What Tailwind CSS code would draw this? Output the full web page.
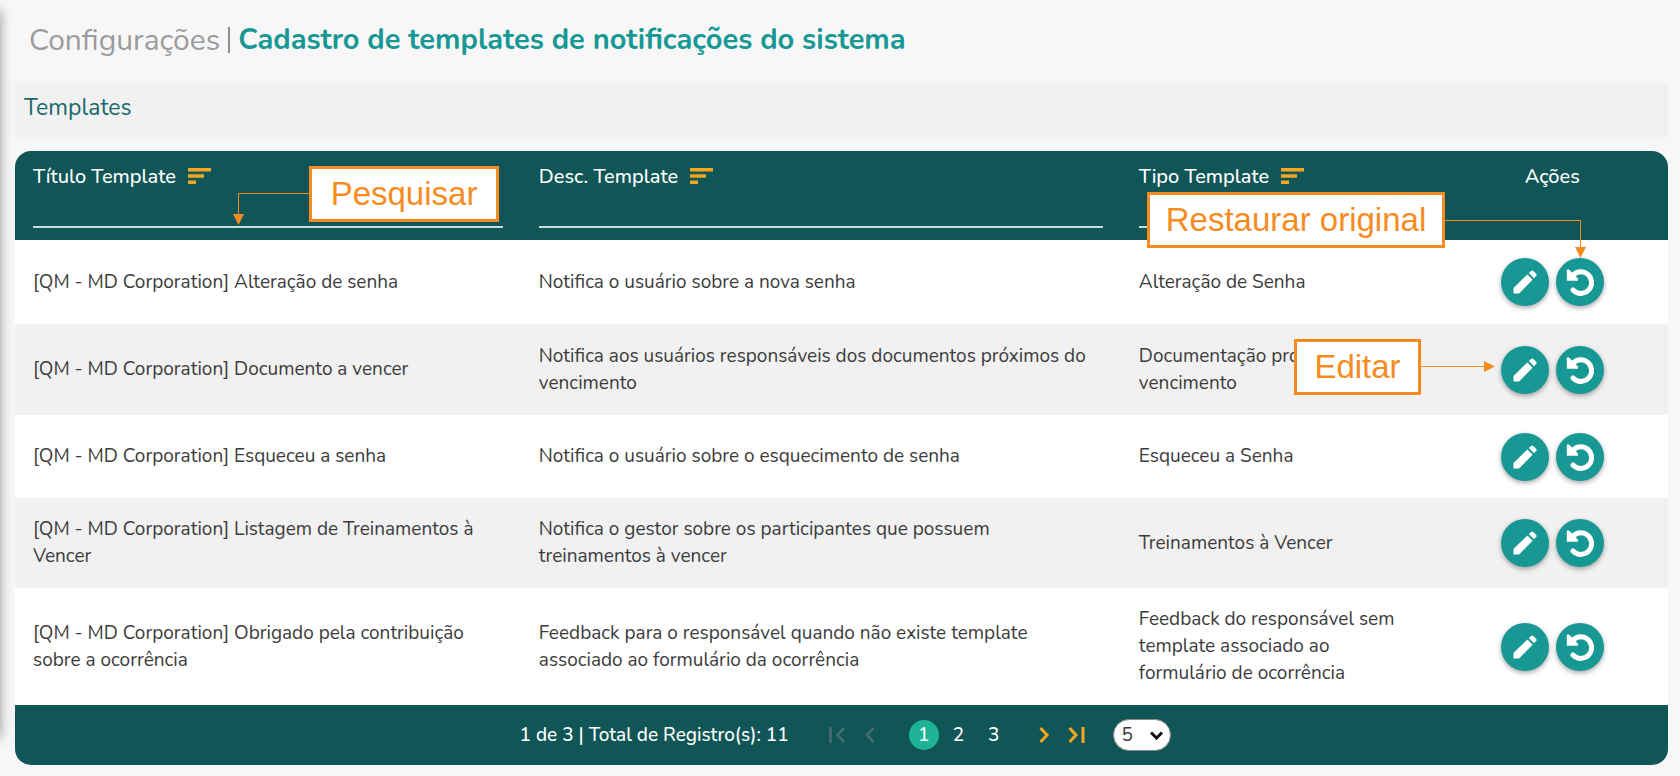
<!DOCTYPE html>
<html lang="pt-BR">
<head>
<meta charset="utf-8">
<meta name="viewport" content="width=device-width, initial-scale=1">
<title>Cadastro de templates de notificações do sistema</title>
<script src="https://cdn.jsdelivr.net/npm/@tailwindcss/browser@4"></script>
</head>
<body class="relative min-h-screen overflow-x-hidden bg-[#f7f7f7] font-['Nunito','Open_Sans',sans-serif] text-[#3c3c3c]">

<svg class="hidden" aria-hidden="true">
  <symbol id="sort" viewBox="0 0 23 16"><path fill="currentColor" d="M0 0h23v3.500H0zM0 6.300h16v3.400H0zM0 12.500h8V16H0z"/></symbol>
  <symbol id="pencil" viewBox="0 0 24 24"><path fill="currentColor" d="M.5 23.500v-5.500L14.400 4.500l5.200 5.200L6 23.500zM15.800 3.100l2-1.900a2 2 0 0 1 2.800 0l2.300 2.300a2 2 0 0 1 0 2.800L21 8.300z"/></symbol>
  <symbol id="undo" viewBox="0 0 28 28"><path fill="none" stroke="currentColor" stroke-width="5" stroke-linecap="round" d="M7 7.200A10.800 10.800 0 1 1 7 22"/><path fill="currentColor" d="M.8 1.500h2.200L12 10.500v2.200H.8z"/></symbol>
</svg>

<!-- Edge of the collapsed side menu -->
<div class="absolute bottom-10 -left-4 top-3 w-4 shadow-[0_0_12px_1px_rgba(0,0,0,0.35)]" aria-hidden="true"></div>

<main class="pl-[15px] pr-3 pb-3">
  <h1 class="flex h-[84px] items-center gap-2 pb-1 pl-[14px] text-[30px]">
    <span class="text-[#9c9c9c]">Configurações</span>
    <span class="h-[26px] w-0.5 bg-[#8f8f8f]" aria-hidden="true"></span>
    <span class="text-[29px] font-bold text-[#189894]">Cadastro de templates de notificações do sistema</span>
  </h1>
  <h2 class="mb-[14px] flex h-[53px] items-center bg-[#f1f1f1] pb-1 pl-[9px] text-[23px] text-[#16696a]">Templates</h2>

  <div class="relative">
    <table class="w-full table-fixed border-separate border-spacing-0 text-left text-[19px] leading-[27px]">
      <colgroup><col class="w-[30.6%]"><col class="w-[36.3%]"><col class="w-[19.1%]"><col class="w-[14%]"></colgroup>
      <thead class="text-[20px] text-white">
        <tr class="align-top">
          <th class="h-[89px] rounded-tl-2xl bg-[#105656] px-[18px] pt-3 font-medium">
            <span class="flex items-center gap-3"><label for="f1">Título Template</label><button type="button" aria-label="Ordenar por título" class="pb-0.5 text-[#f5a623]"><svg class="h-4 w-[23px]"><use href="#sort"/></svg></button></span>
            <input id="f1" type="text" class="block h-[38px] w-full border-b-2 border-[#c9dcdb] bg-transparent outline-none">
          </th>
          <th class="bg-[#105656] px-[18px] pt-3 font-medium">
            <span class="flex items-center gap-3"><label for="f2">Desc. Template</label><button type="button" aria-label="Ordenar por descrição" class="pb-0.5 text-[#f5a623]"><svg class="h-4 w-[23px]"><use href="#sort"/></svg></button></span>
            <input id="f2" type="text" class="block h-[38px] w-full border-b-2 border-[#c9dcdb] bg-transparent outline-none">
          </th>
          <th class="bg-[#105656] px-[18px] pt-3 font-medium">
            <span class="flex items-center gap-3"><label for="f3">Tipo Template</label><button type="button" aria-label="Ordenar por tipo" class="pb-0.5 text-[#f5a623]"><svg class="h-4 w-[23px]"><use href="#sort"/></svg></button></span>
            <input id="f3" type="text" class="block h-[38px] w-full border-b-2 border-[#c9dcdb] bg-transparent outline-none">
          </th>
          <th class="rounded-tr-2xl bg-[#105656] px-[18px] pt-3 text-center font-medium">Ações</th>
        </tr>
      </thead>
      <tbody>
        <tr class="h-[84px] bg-white">
          <td class="px-[18px]">[QM - MD Corporation] Alteração de senha</td>
          <td class="px-[18px]">Notifica o usuário sobre a nova senha</td>
          <td class="px-[18px]">Alteração de Senha</td>
          <td><div class="flex justify-center gap-[7px]"><button type="button" aria-label="Editar" class="grid size-12 place-items-center rounded-full bg-[#189894] text-white shadow-[0_2px_5px_rgba(0,0,0,0.35)]"><svg class="size-6"><use href="#pencil"/></svg></button><button type="button" aria-label="Restaurar original" class="grid size-12 place-items-center rounded-full bg-[#189894] text-white shadow-[0_2px_5px_rgba(0,0,0,0.35)]"><svg class="size-7"><use href="#undo"/></svg></button></div></td>
        </tr>
        <tr class="h-[91px] bg-[#f1f1f1]">
          <td class="px-[18px]">[QM - MD Corporation] Documento a vencer</td>
          <td class="px-[18px]">Notifica aos usuários responsáveis dos documentos próximos do vencimento</td>
          <td class="px-[18px]">Documentação próximo do vencimento</td>
          <td><div class="flex justify-center gap-[7px]"><button type="button" aria-label="Editar" class="grid size-12 place-items-center rounded-full bg-[#189894] text-white shadow-[0_2px_5px_rgba(0,0,0,0.35)]"><svg class="size-6"><use href="#pencil"/></svg></button><button type="button" aria-label="Restaurar original" class="grid size-12 place-items-center rounded-full bg-[#189894] text-white shadow-[0_2px_5px_rgba(0,0,0,0.35)]"><svg class="size-7"><use href="#undo"/></svg></button></div></td>
        </tr>
        <tr class="h-[83px] bg-white">
          <td class="px-[18px]">[QM - MD Corporation] Esqueceu a senha</td>
          <td class="px-[18px]">Notifica o usuário sobre o esquecimento de senha</td>
          <td class="px-[18px]">Esqueceu a Senha</td>
          <td><div class="flex justify-center gap-[7px]"><button type="button" aria-label="Editar" class="grid size-12 place-items-center rounded-full bg-[#189894] text-white shadow-[0_2px_5px_rgba(0,0,0,0.35)]"><svg class="size-6"><use href="#pencil"/></svg></button><button type="button" aria-label="Restaurar original" class="grid size-12 place-items-center rounded-full bg-[#189894] text-white shadow-[0_2px_5px_rgba(0,0,0,0.35)]"><svg class="size-7"><use href="#undo"/></svg></button></div></td>
        </tr>
        <tr class="h-[90px] bg-[#f1f1f1]">
          <td class="px-[18px]">[QM - MD Corporation] Listagem de Treinamentos à Vencer</td>
          <td class="px-[18px]">Notifica o gestor sobre os participantes que possuem treinamentos à vencer</td>
          <td class="px-[18px]">Treinamentos à Vencer</td>
          <td><div class="flex justify-center gap-[7px]"><button type="button" aria-label="Editar" class="grid size-12 place-items-center rounded-full bg-[#189894] text-white shadow-[0_2px_5px_rgba(0,0,0,0.35)]"><svg class="size-6"><use href="#pencil"/></svg></button><button type="button" aria-label="Restaurar original" class="grid size-12 place-items-center rounded-full bg-[#189894] text-white shadow-[0_2px_5px_rgba(0,0,0,0.35)]"><svg class="size-7"><use href="#undo"/></svg></button></div></td>
        </tr>
        <tr class="h-[117px] bg-white">
          <td class="px-[18px]">[QM - MD Corporation] Obrigado pela contribuição sobre a ocorrência</td>
          <td class="px-[18px]">Feedback para o responsável quando não existe template associado ao formulário da ocorrência</td>
          <td class="pl-[18px] pr-6">Feedback do responsável sem template associado ao formulário de ocorrência</td>
          <td><div class="flex justify-center gap-[7px]"><button type="button" aria-label="Editar" class="grid size-12 place-items-center rounded-full bg-[#189894] text-white shadow-[0_2px_5px_rgba(0,0,0,0.35)]"><svg class="size-6"><use href="#pencil"/></svg></button><button type="button" aria-label="Restaurar original" class="grid size-12 place-items-center rounded-full bg-[#189894] text-white shadow-[0_2px_5px_rgba(0,0,0,0.35)]"><svg class="size-7"><use href="#undo"/></svg></button></div></td>
        </tr>
      </tbody>
    </table>

    <nav aria-label="Paginação" class="flex h-[60px] items-center justify-center rounded-b-2xl bg-[#105656] pl-2 text-[19px] font-medium text-white">
      <span class="mr-10">1 de 3 | Total de Registro(s): 11</span>
      <button type="button" disabled aria-label="Primeira página" class="mr-[18px] text-[#4f6a73]"><svg class="h-4 w-[17px]" viewBox="0 0 17 16" fill="none" stroke="currentColor" stroke-width="2.500"><path d="M1.500 0v16M15 1L8.500 8l6.500 7"/></svg></button>
      <button type="button" disabled aria-label="Página anterior" class="mr-[34px] text-[#4f6a73]"><svg class="h-4 w-[11px]" viewBox="0 0 11 16" fill="none" stroke="currentColor" stroke-width="2.500"><path d="M9.500 1L3 8l6.500 7"/></svg></button>
      <button type="button" aria-current="page" class="size-[30px] rounded-full bg-[#1eb394]">1</button>
      <button type="button" class="ml-[14px]">2</button>
      <button type="button" class="ml-6">3</button>
      <button type="button" aria-label="Próxima página" class="ml-10 text-[#f9a61c]"><svg class="h-4 w-[11px]" viewBox="0 0 11 16" fill="none" stroke="currentColor" stroke-width="3"><path d="M1.500 1L8 8l-6.500 7"/></svg></button>
      <button type="button" aria-label="Última página" class="ml-[18px] text-[#f9a61c]"><svg class="h-4 w-[17px]" viewBox="0 0 17 16" fill="none" stroke="currentColor" stroke-width="3"><path d="M1.500 1L8 8l-6.500 7M15 0v16"/></svg></button>
      <span class="relative ml-7">
        <select aria-label="Registros por página" class="block h-8 w-[58px] appearance-none rounded-full border border-[#8a8a8a] bg-white pl-[7px] text-[19px] font-normal leading-6 text-[#3c3c3c]"><option>5</option><option>10</option><option>20</option></select>
        <svg class="pointer-events-none absolute right-2 top-3 h-[9px] w-[13px]" viewBox="0 0 13 9" fill="none" stroke="#111" stroke-width="3"><path d="M1 1.500l5.500 5.500L12 1.500"/></svg>
      </span>
    </nav>

    <!-- Call-outs drawn over the table -->
    <div class="pointer-events-none font-['Liberation_Sans',Arial,sans-serif] text-[33px] text-[#f68b1f]">
      <svg class="absolute left-[217px] top-[42px] h-8 w-[77px]" viewBox="0 0 77 32"><path fill="none" stroke="currentColor" d="M77 .5H6.500V22"/><path fill="currentColor" d="M1 21h11L6.500 32z"/></svg>
      <div class="absolute left-[294px] top-[15px] flex h-14 w-[190px] items-center justify-center border-[3px] border-current bg-white">Pesquisar</div>
      <svg class="absolute right-[81px] top-[69px] h-[38px] w-[142px]" viewBox="0 0 142 38"><path fill="none" stroke="currentColor" d="M0 .5h135.500V28"/><path fill="currentColor" d="M130 27h11l-5.500 11z"/></svg>
      <div class="absolute right-[223px] top-[41px] flex h-14 w-[298px] items-center justify-center border-[3px] border-current bg-white">Restaurar original</div>
      <svg class="absolute right-[173px] top-[210px] h-[11px] w-[75px]" viewBox="0 0 75 11"><path fill="none" stroke="currentColor" d="M0 5.500h65"/><path fill="currentColor" d="M64 0v11l11-5.500z"/></svg>
      <div class="absolute right-[247px] top-[188px] flex h-14 w-[127px] items-center justify-center border-[3px] border-current bg-white">Editar</div>
    </div>
  </div>
</main>
</body>
</html>
